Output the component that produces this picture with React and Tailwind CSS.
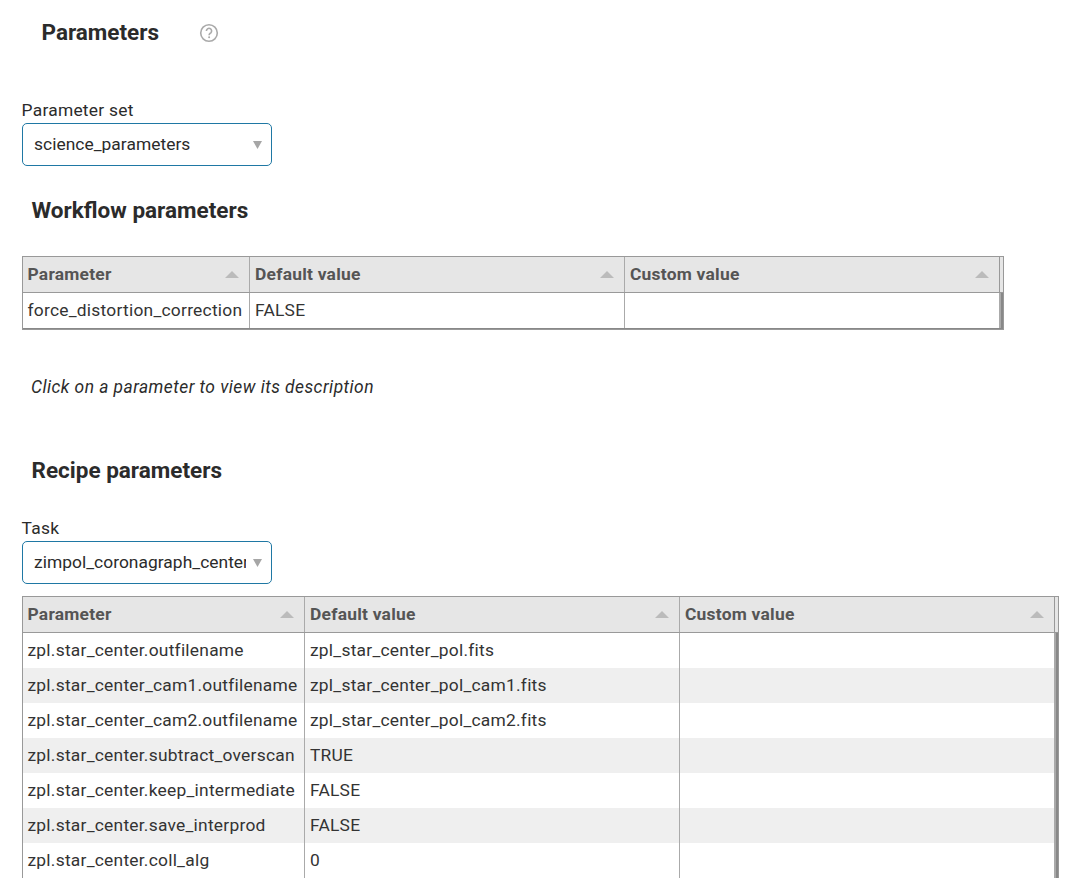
import React from 'react';

const workflowRows = [
    { name: 'force_distortion_correction', value: 'FALSE' },
];

const recipeRows = [
    { name: 'zpl.star_center.outfilename', value: 'zpl_star_center_pol.fits' },
    { name: 'zpl.star_center_cam1.outfilename', value: 'zpl_star_center_pol_cam1.fits' },
    { name: 'zpl.star_center_cam2.outfilename', value: 'zpl_star_center_pol_cam2.fits' },
    { name: 'zpl.star_center.subtract_overscan', value: 'TRUE' },
    { name: 'zpl.star_center.keep_intermediate', value: 'FALSE' },
    { name: 'zpl.star_center.save_interprod', value: 'FALSE' },
    { name: 'zpl.star_center.coll_alg', value: '0' },
];

function Select({ label, value }) {
    return (
        <div className="w-[250px]">
            <div className="h-[26px] leading-[26px] -ml-[0.4px]">{label}</div>
            <button className="flex items-center w-full h-[43px] pl-[11px] pr-[9.5px] rounded-[5px] border border-[#1f78a4] bg-white text-left tracking-[0.03px]">
                <span className="w-[212px] overflow-hidden whitespace-nowrap leading-[30px] -mt-0.5">{value}</span>
                <svg className="ml-auto w-[9px] h-2" viewBox="0 0 9 8">
                    <path d="M0 0h9L4.5 8z" fill="#a6a6a6" />
                </svg>
            </button>
        </div>
    );
}

function HeaderCell({ title, last }) {
    return (
        <div className={`flex items-center justify-between pl-[5px] first:pl-[4.5px] pr-[10px] ${last ? 'border-r border-[#999]' : 'border-r border-[#aaa]'}`}>
            <span>{title}</span>
            <svg className="w-[14px] h-[7px] -mt-px" viewBox="0 0 14 7">
                <path d="M0 7L7 0l7 7z" fill="#bbb" />
            </svg>
        </div>
    );
}

function ParameterTable({ rows, columns, closed }) {
    return (
        <div className={`w-fit border-[#999] border-t border-x ${closed ? 'border-b' : ''}`}>
            {/* Header */}
            <div className={`grid ${columns} h-9 bg-[#e6e6e6] border-b border-[#999] font-bold text-[#555]`}>
                <HeaderCell title="Parameter" />
                <HeaderCell title="Default value" />
                <HeaderCell title="Custom value" last />
            </div>

            {/* Rows */}
            <div className={closed ? 'border-b border-[#888]' : ''}>
                {rows.map((row, i) => (
                    <div key={row.name}
                        className={`grid ${columns} h-[35px] leading-[35px] text-[#333] ${i % 2 ? 'bg-[#efefef]' : 'bg-white'}`}>
                        <div className="pl-[4.5px] border-r border-[#aaa] whitespace-nowrap">{row.name}</div>
                        <div className="pl-[5px] border-r border-[#aaa]">{row.value}</div>
                        <div className="border-r border-[#aaa]" />
                        <div className="bg-[#888] border-l border-[#aaa]" />
                    </div>
                ))}
            </div>
        </div>
    );
}

function App() {
    return (
        <div className="min-h-[893px] bg-white pl-[22px] pt-4 font-['Roboto',sans-serif] text-[17.4px] tracking-[0.24px] text-[#2b2b2b]">
            <div className="flex items-center gap-[39.5px] h-8 pl-[19.5px]">
                <h1 className="mt-0.5 text-[22.5px] font-bold tracking-normal">Parameters</h1>
                <svg className="w-5 h-5 mt-0.5" viewBox="0 0 20 20" fill="none" stroke="#aaa">
                    <circle cx="10" cy="10" r="8.3" strokeWidth="1.6" />
                    <path d="M7.4 8a2.6 2.6 0 1 1 4.4 1.8c-1 .9-1.7 1.3-1.7 2.4" strokeWidth="1.6" />
                    <circle cx="10.1" cy="14.2" r="1" fill="#aaa" stroke="none" />
                </svg>
            </div>

            <div className="mt-[49px]">
                <Select label="Parameter set" value="science_parameters" />
            </div>

            <h2 className="mt-7 mb-[30px] pl-[9.5px] h-8 leading-8 text-[22.5px] font-bold tracking-normal">Workflow parameters</h2>
            <ParameterTable rows={workflowRows} columns="grid-cols-[227px_375px_375px_3px]" closed />

            <p className="mt-[42px] pl-[9px] h-[30px] leading-[30px] italic tracking-[0.46px]">
                Click on a parameter to view its description
            </p>

            <h2 className="mt-[52px] mb-[29px] pl-[9.5px] h-8 leading-8 text-[22.5px] font-bold tracking-normal">Recipe parameters</h2>
            <Select label="Task" value="zimpol_coronagraph_center" />
            <div className="mt-3">
                <ParameterTable rows={recipeRows} columns="grid-cols-[282px_375px_375px_3px]" />
            </div>
        </div>
    );
}

export default App;
